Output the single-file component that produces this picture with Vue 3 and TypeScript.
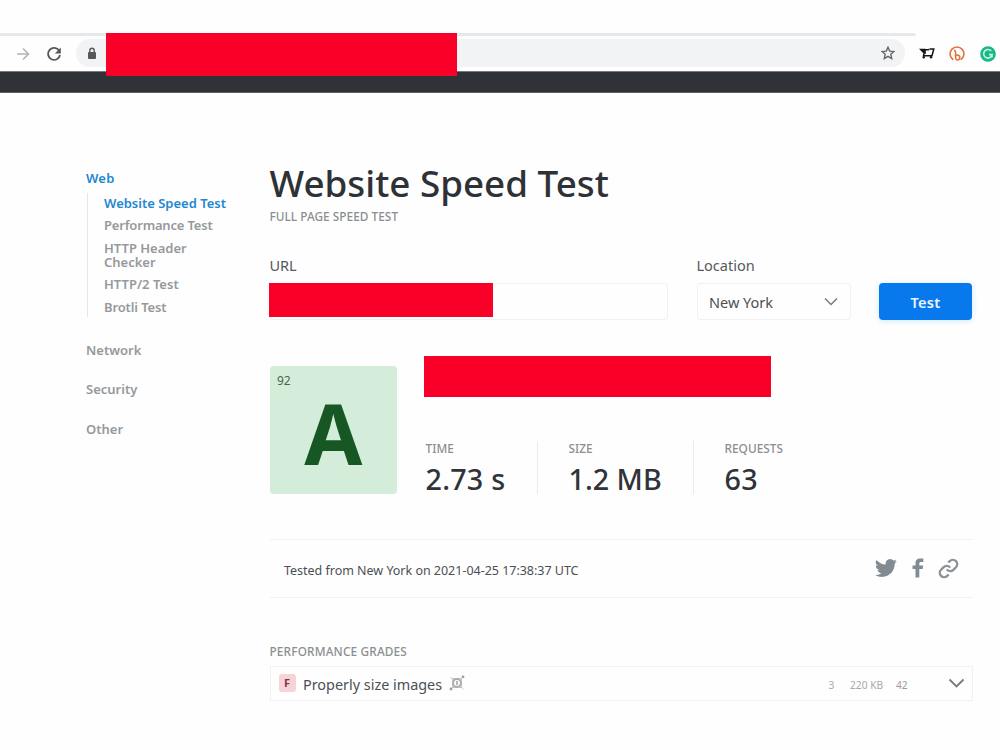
<script setup lang="ts">
interface NavItem { label: string; active?: boolean; cls: string }

const webItems: NavItem[] = [
  { label: 'Website Speed Test', active: true, cls: 'speed' },
  { label: 'Performance Test', cls: 'performance' },
  { label: 'HTTP Header Checker', cls: 'header-check' },
  { label: 'HTTP/2 Test', cls: 'http2' },
  { label: 'Brotli Test', cls: 'brotli' },
]
const groups: string[] = ['Network', 'Security', 'Other']
const stats = [
  { label: 'TIME', value: '2.73 s', cls: 'time' },
  { label: 'SIZE', value: '1.2 MB', cls: 'size' },
  { label: 'REQUESTS', value: '63', cls: 'requests' },
]
</script>

<template>
  <div class="page">
    <header class="browser">
      <div class="tab-line"></div>
      <div class="toolbar">
        <svg class="forward" width="14" height="14" viewBox="0 0 14 14"><path d="M1 7h11M7 1.5 12.5 7 7 12.5" /></svg>
        <svg class="reload" width="16" height="16" viewBox="0 0 16 16"><path d="M13.2 4.7A6 6 0 1 0 14 9" /><path class="fill" d="M14.8 1.5v6H8.9z" /></svg>
        <div class="address">
          <svg class="lock" width="10" height="13" viewBox="0 0 10 13"><rect x="1" y="5" width="8" height="7" rx="1" /><path d="M2.8 5V3.4a2.2 2.2 0 0 1 4.4 0V5" /></svg>
          <svg class="star" width="14" height="14" viewBox="0 0 14 14"><path d="m7 1.2 1.7 3.9 4.3.4-3.2 2.8.9 4.2L7 10.3 3.3 12.5l.9-4.2L1 5.5l4.300-.4z" /></svg>
          <div class="redacted address-mask"></div>
        </div>
        <svg class="cart" width="16" height="13" viewBox="0 0 16 13"><path class="solid" d="M0 1.800h6.500L7 7 3.500 5.500z" /><path d="M3.500 2.800H9l1.200-.3M10.500 2h4.300L13 8.800H4.500L5.800 3" /><circle cx="4.800" cy="10.300" r="1.200" /><circle cx="12" cy="10.300" r="1.200" /></svg>
        <svg class="bitly" width="16" height="16" viewBox="0 0 16 16"><path d="M4.300 13.700a6.900 6.900 0 1 1 7.400 0" /><path d="M5 4.200c1.300.2 1.600 1.300 1.600 2.800v4.300c0 2 1 2.900 2.300 2.700 1.900-.3 2.500-2.800 1.300-4.300-.9-1.100-2.500-1-3.500.2" /></svg>
        <svg class="grammarly" width="16" height="16" viewBox="0 0 16 16"><circle cx="8" cy="8" r="7.800" /><path d="M11.200 4.900A4.300 4.300 0 1 0 12.200 8.600H9M12 8.600v2.900" /></svg>
      </div>
    </header>
    <div class="site-bar"></div>

    <main class="main">
      <nav class="sidebar">
        <div class="group-title web on">Web</div>
        <ul class="sub">
          <li v-for="i in webItems" :key="i.label" :class="[i.cls, { on: i.active }]">{{ i.label }}</li>
        </ul>
        <div v-for="g in groups" :key="g" class="group-title other">{{ g }}</div>
      </nav>

      <section class="content">
        <h1>Website Speed Test</h1>
        <div class="caption subtitle">FULL PAGE SPEED TEST</div>

        <div class="form">
          <div class="field url">
            <label>URL</label>
            <div class="input"><div class="redacted url-mask"></div></div>
          </div>
          <div class="field location">
            <label>Location</label>
            <div class="input select">
              <span>New York</span>
              <svg width="14" height="9" viewBox="0 0 14 9"><path d="m1 1.500 6 6 6-6" /></svg>
            </div>
          </div>
          <button>Test</button>
        </div>

        <div class="summary">
          <div class="grade"><span class="score">92</span><span class="letter">A</span></div>
          <div class="result">
            <div class="redacted site-mask"></div>
            <div class="stats">
              <div v-for="s in stats" :key="s.label" class="stat" :class="s.cls">
                <div class="caption">{{ s.label }}</div>
                <div class="value">{{ s.value }}</div>
              </div>
            </div>
          </div>
        </div>

        <div class="meta">
          <span class="tested">Tested from New York on 2021-04-25 17:38:37 UTC</span>
          <svg class="twitter" width="22" height="22" viewBox="0 0 24 24"><path d="M23.950 4.570a10 10 0 0 1-2.820.770 4.960 4.960 0 0 0 2.160-2.720c-.950.550-2.010.950-3.130 1.180a4.920 4.920 0 0 0-8.380 4.480C7.690 8.090 4.070 6.130 1.640 3.160a4.920 4.920 0 0 0 1.520 6.570 4.900 4.900 0 0 1-2.230-.610v.060a4.920 4.920 0 0 0 3.950 4.830 5 5 0 0 1-2.210.080 4.940 4.940 0 0 0 4.600 3.420A9.870 9.870 0 0 1 0 19.540a13.990 13.990 0 0 0 7.550 2.210c9.050 0 14-7.500 14-13.980 0-.210 0-.420-.020-.630a9.940 9.940 0 0 0 2.420-2.570z" /></svg>
          <svg class="facebook" width="12" height="20" viewBox="0 0 12 20"><path d="M3.500 19.500V11H.5V7.400h3V5c0-3 1.700-4.500 4.300-4.500h3.500V4H9.200C7.700 4 7.300 4.600 7.300 5.700v1.700h3.900L10.700 11H7.300v8.500z" /></svg>
          <svg class="link" width="21" height="21" viewBox="0 0 24 24"><path d="M10 13a5 5 0 0 0 7.540.540l3-3a5 5 0 0 0-7.070-7.070l-1.720 1.710" /><path d="M14 11a5 5 0 0 0-7.540-.540l-3 3a5 5 0 0 0 7.070 7.070l1.710-1.710" /></svg>
        </div>

        <div class="caption grades-title">PERFORMANCE GRADES</div>
        <div class="grade-row">
          <span class="badge">F</span>
          <span class="name">Properly size images</span>
          <svg class="image-icon" width="16" height="16" viewBox="0 0 16 16"><path class="frame" d="M1.500 2.500 5 5M15 1l-4.500 4M1 15l4-4M11 11l3.500 3M3.500 4v8M12.500 4v8M4 3.500h8M4 12.500h8" /><circle cx="8" cy="8" r="3.800" /><path class="core" d="M8 6v4" /><circle class="dot" cx="14" cy="1.800" r="1.400" /><circle class="dot" cx="2" cy="14" r="1.400" /></svg>
          <span class="num count">3</span>
          <span class="num weight">220 KB</span>
          <span class="num points">42</span>
          <svg class="expand" width="17" height="11" viewBox="0 0 17 11"><path d="m1.500 1.500 7 7 7-7" /></svg>
        </div>
      </section>
    </main>
  </div>
</template>

<style>
body { margin: 0; background: #fefefe; overflow: hidden; }
</style>

<style scoped>
* { box-sizing: border-box; }
.page { width: 1000px; height: 750px; overflow: hidden; background: #fefefe; font-family: "Noto Sans", "Open Sans", sans-serif; color: #4b5054; }
svg { display: block; flex: none; fill: none; }
.redacted { background: #f90029; }
.browser { height: 71px; padding-top: 33px; }
.tab-line { width: 916px; height: 3px; background: #e6e8ea; border-top-right-radius: 3px; }
.toolbar { display: flex; align-items: center; height: 35px; padding: 0 4px 0 16px; }
.forward { stroke: #b3b4b5; stroke-width: 1.6; }
.reload { margin-left: 16px; stroke: #55585b; stroke-width: 1.9; }
.reload .fill { fill: #55585b; stroke: none; }
.address { position: relative; display: flex; align-items: center; justify-content: space-between; width: 829px; height: 28px; margin-left: 14px; margin-top: -1px; padding: 0 10px 0 11px; border-radius: 14px; background: #f1f3f4; }
.address-mask { position: absolute; left: 30px; top: -6px; width: 350.500px; height: 42.500px; z-index: 2; }
.lock { stroke: #55585b; stroke-width: 1.4; }
.lock rect { fill: #55585b; stroke: none; }
.star { stroke: #65686b; stroke-width: 1.4; }
.cart { margin-left: 14px; stroke: #151719; stroke-width: 1.5; }
.cart .solid, .cart circle { fill: #151719; stroke: none; }
.bitly { margin-left: 14px; stroke: #df743d; stroke-width: 1.6; }
.grammarly { margin-left: 15px; stroke: #c9f2e2; stroke-width: 1.6; }
.grammarly circle { fill: #18b886; stroke: none; }
.site-bar { height: 22px; background: #2f3337; border-top: 1px solid #777a7c; border-bottom: 1px solid #5f6264; }

.main { display: flex; padding: 75px 27px 0 86px; }
.sidebar { width: 183.500px; flex: none; font-size: 13px; font-weight: 600; line-height: 15px; color: #96999b; }
.group-title.web { padding-top: 2.500px; height: 22px; letter-spacing: .2px; }
.on { color: #2387d0; }
.sub { width: 150px; margin: 3px 0 0 1px; padding: 3.400px 0 0 16px; list-style: none; border-left: 1px solid #e6e7e8; display: flex; flex-direction: column; gap: 7.300px; line-height: 14.800px; height: 124px; }
.sub li { width: 124px; white-space: nowrap; }
.sub li.header-check { width: 100px; white-space: normal; }
.sub li.performance { letter-spacing: -.18px; }
.sub li.brotli { letter-spacing: -.12px; }
.group-title.other { height: 39.500px; }
.sub + .group-title.other { margin-top: 25.500px; }

.content { width: 703px; flex: none; }
h1 { margin: 0; height: 42px; line-height: 31px; font-size: 36.800px; font-weight: 500; color: #2e3236; white-space: nowrap; }
.caption { font-size: 11.800px; font-weight: 500; line-height: 14px; color: #8b8e91; white-space: nowrap; letter-spacing: .04px; }
.form { display: flex; align-items: flex-end; height: 63px; margin-top: 32px; }
.subtitle { height: 15px; margin-top: -1px; padding-bottom: 1px; }
.subtitle + .form { margin-top: 33px; }
label { display: block; height: 26px; font-size: 14.500px; line-height: 17px; color: #55595c; }
.url { width: 398.500px; }
.location { width: 154px; margin-left: 28.500px; }
.input { height: 37px; border: 1px solid #f0f1f2; border-radius: 3px; }
.url-mask { width: 223.500px; height: 34px; margin: -1.500px 0 0 -1.500px; }
.select { display: flex; align-items: center; justify-content: space-between; padding: 0 12px 0 11.500px; font-size: 14.500px; }
.select svg { stroke: #777a7d; stroke-width: 1.5; }
button { width: 93px; height: 37px; margin-left: 28.500px; padding: 0; border: 0; border-radius: 4px; background: #0879ed; box-shadow: 0 1px 6px #cfe8fb; color: #e9f6ff; font: 600 14.500px "Noto Sans", sans-serif; letter-spacing: .3px; }
.summary { display: flex; height: 139px; margin-top: 35.500px; }
.grade { display: flex; flex-direction: column; width: 127.500px; height: 127.500px; margin-top: 10.500px; border-radius: 4px; background: #d4edda; }
.score { height: 32px; padding: 6px 0 0 7.500px; font-size: 12px; line-height: 17px; color: #3e6850; }
.letter { text-align: center; font: 700 84px/70px "Noto Sans", sans-serif; color: #165724; }
.result { margin-left: 26.500px; }
.site-mask { width: 347.500px; height: 41.500px; }
.stats { display: flex; margin-top: 43.500px; }
.stat { height: 53px; padding: 0 0 0 30.500px; border-left: 1px solid #e9ebec; }
.time { width: 113.500px; padding-left: 2px; border-left: 0; }
.size { width: 156px; }
.value { font-size: 28.700px; font-weight: 500; line-height: 40px; margin-top: 4px; color: #303438; white-space: nowrap; }
.time .value, .requests .value { letter-spacing: .25px; }
.meta { display: flex; align-items: center; height: 59px; margin-top: 44.500px; padding: 0 14px 0 14.500px; border-top: 1px solid #f0f2f2; border-bottom: 1px solid #f0f2f2; }
.tested { font-size: 12.500px; letter-spacing: -.02px; margin-right: auto; margin-top: 3px; white-space: nowrap; }
.meta path { stroke: none; fill: #838b92; }
.twitter, .facebook { margin-top: -1px; }
.facebook { margin-left: 15px; }
.link { margin-left: 14px; }
.meta .link path { fill: none; stroke: #8c9194; stroke-width: 2.700; }
.grades-title { margin-top: 46px; padding-bottom: 1px; letter-spacing: .17px; }
.grade-row { display: flex; align-items: center; height: 35px; margin-top: 7px; padding: 0 7px 0 8px; border: 1px solid #f0f1f2; white-space: nowrap; }
.badge { width: 17px; height: 18px; margin-top: -1px; border-radius: 3px; background: #f5d3d7; color: #813442; font-size: 11px; font-weight: 700; line-height: 18px; text-align: center; }
.name { width: 139px; margin-left: 7.500px; padding-top: 1px; font-size: 14.400px; }
.image-icon { margin-left: 7px; margin-top: -2px; stroke: #a7aaa9; stroke-width: 1.700; }
.image-icon .frame { stroke-width: 1; stroke: #c0c2c2; }
.image-icon .dot { fill: #999c9b; stroke: none; }
.num { font-size: 10.200px; color: #aaa8a9; padding-top: 2px; }
.count { margin-left: auto; width: 21.500px; }
.weight { width: 46px; }
.points { width: 51.500px; color: #a3979b; }
.expand { stroke: #777b7e; stroke-width: 1.800; }
</style>
